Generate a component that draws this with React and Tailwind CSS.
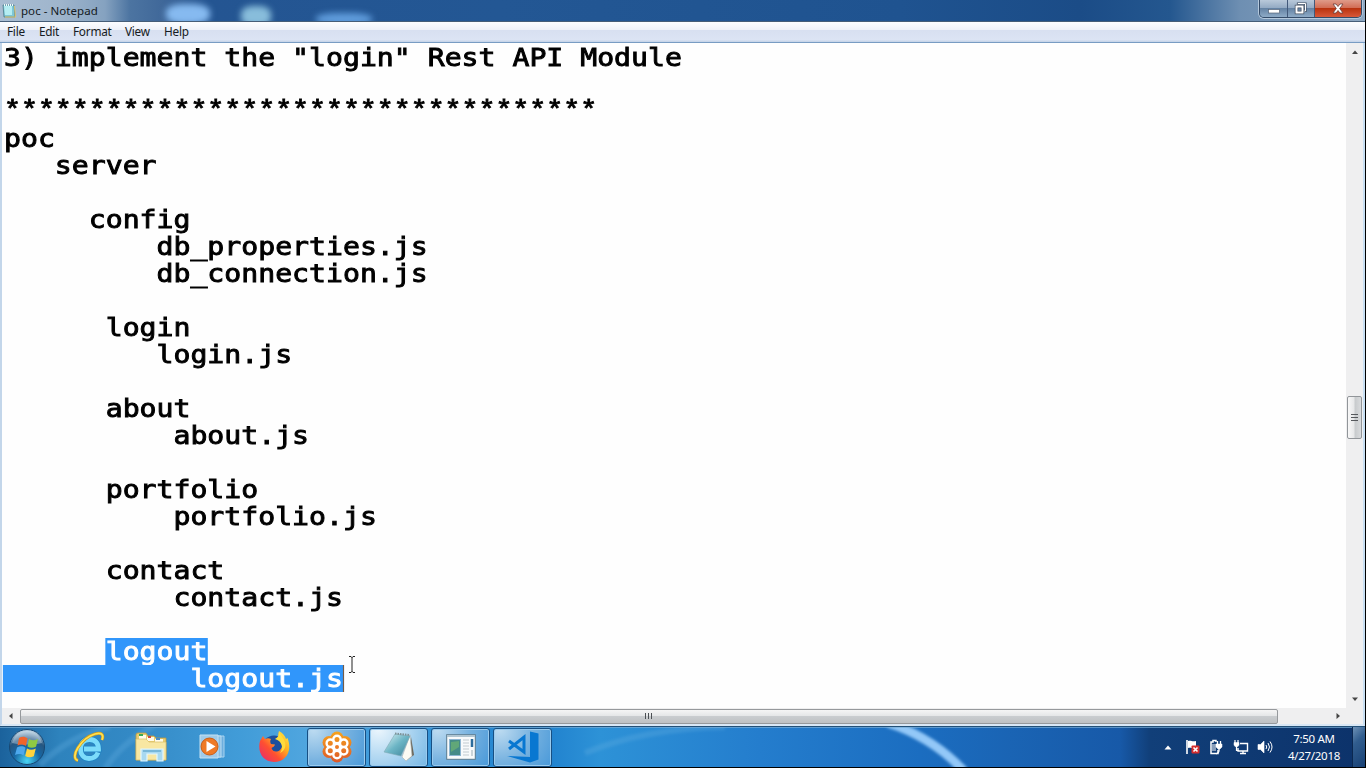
import React from "react";

const before = `3) implement the "login" Rest API Module

***********************************
poc
   server

     config
         db_properties.js
         db_connection.js

      login
         login.js

      about
          about.js

      portfolio
          portfolio.js

      contact
          contact.js
`.split("\n");

const menus = [
  ["File", "w-[32px]"],
  ["Edit", "w-[34px]"],
  ["Format", "w-[52px]"],
  ["View", "w-[39px]"],
  ["Help", "w-[39px]"],
];

function NotepadSmall() {
  return (
    <svg width="14" height="16" viewBox="0 0 14 16">
      <path d="M1 2h11l1 12H2z" fill="#7fc7d6" stroke="#43717f" strokeWidth=".7" />
      <path d="M2 3h8v9H3z" fill="#b5edf2" />
      <path d="M2 2h10" stroke="#eefafa" strokeWidth="2" strokeDasharray="1 1" />
      <path d="M12.500 3l1 11H3" stroke="#e0c66c" fill="none" />
    </svg>
  );
}

function TitleBar() {
  return (
    <div className="relative flex h-[21px] shrink-0 items-center overflow-hidden bg-[linear-gradient(90deg,#a9bdd2_0,#9fb5cc_60px,#85a2c0_105px,#4c74a1_130px,#41699a_160px,#245592_210px,#235794_500px,#1f5390_900px,#1b4c87_1080px,#24578f_1170px,#6e8fb2_1240px,#8ea8c2_1366px)] pl-[2px]">
      <div className="absolute left-[166px] top-[4px] h-[20px] w-[44px] rounded-[40%] bg-[#86baf0] blur-[3px]" />
      <div className="absolute left-[241px] top-[6px] h-[20px] w-[30px] rounded-[40%] bg-[#88bddb] blur-[3px]" />
      <div className="absolute left-[316px] top-[13px] h-[12px] w-[56px] rounded-[40%] bg-[#5f9cdc] blur-[3px]" />
      <NotepadSmall />
      <span className="relative ml-[5px] text-[11.5px] leading-[20px] tracking-[0.05px] text-[#141a22]">poc - Notepad</span>
      <div className="absolute left-[1259px] top-0 flex h-[18px] w-[103px] overflow-hidden rounded-b-[5px] border border-t-0 border-[#344c69] shadow-[0_0_0_1px_#b4c8dc]">
        <div className="flex w-[28px] items-center justify-center border-r border-[#42597a] bg-[linear-gradient(#b9c9da_0,#94abc4_45%,#6583a4_50%,#8eabc7_100%)]">
          <svg width="12" height="6" viewBox="0 0 12 6" className="mt-[4px]"><rect x=".5" y="1.500" width="11" height="3.500" fill="#fff" stroke="#56657a" strokeWidth=".7" /></svg>
        </div>
        <div className="flex w-[27px] items-center justify-center border-r border-[#42597a] bg-[linear-gradient(#b9c9da_0,#94abc4_45%,#6583a4_50%,#8eabc7_100%)] pr-[2px]">
          <svg width="13" height="13" viewBox="0 0 13 13" fill="none" className="mb-[1px]">
            <path d="M4 3V1.500h7.500V9H9.500" stroke="#3e4b5c" strokeWidth="2.200" />
            <path d="M4 2.500V1.500h7.500V9H9.500" stroke="#fff" strokeWidth="1" />
            <rect x="2.500" y="4.500" width="6" height="6" stroke="#3e4b5c" strokeWidth="3.400" />
            <rect x="2.500" y="4.500" width="6" height="6" stroke="#fff" strokeWidth="2" />
          </svg>
        </div>
        <div className="flex flex-1 items-center justify-center bg-[linear-gradient(#df9b89_0,#d26e56_45%,#b9330f_50%,#d8593a_100%)]">
          <svg width="12" height="11" viewBox="0 0 12 11" className="mb-[1px]">
            <path d="M1 1h3l2 2.500L8 1h3L7.700 5.500 11 10H8L6 7.500 4 10H1l3.300-4.500z" fill="#fff" stroke="#6a3d3a" strokeWidth=".8" />
          </svg>
        </div>
      </div>
    </div>
  );
}

function Arrow({ d }) {
  return (
    <svg width="8" height="8" viewBox="0 0 8 8"><path d={d} fill="#454545" /></svg>
  );
}

function IeIcon() {
  return (
    <svg width="32" height="32" viewBox="0 0 32 32" fill="none">
      <path d="M25 21.500C23.500 25.500 20 27.500 16 27.500 10.500 27.500 7.500 23.500 7.500 18S11 8.500 16.500 8.500 25.500 12 25.500 18H11" stroke="#2184c4" strokeWidth="6.400" />
      <path d="M25 21.500C23.500 25.500 20 27.500 16 27.500 10.500 27.500 7.500 23.500 7.500 18S11 8.500 16.500 8.500 25.500 12 25.500 18H11" stroke="#7cdcfb" strokeWidth="4.800" />
      <path d="M5 29.500C-4 27 8 7 22 3c7-2 9 1 7 6" stroke="#d79e16" strokeWidth="3" />
      <path d="M5 29.500C-4 27 8 7 22 3c7-2 9 1 7 6" stroke="#ffe052" strokeWidth="1.800" />
    </svg>
  );
}

function StartOrb() {
  return (
    <svg width="38" height="38" viewBox="0 0 38 38">
      <defs>
        <radialGradient id="orb" cx=".5" cy=".9" r=".85">
          <stop offset="0" stopColor="#49d6f5" /><stop offset=".45" stopColor="#1767a4" /><stop offset=".75" stopColor="#265680" /><stop offset="1" stopColor="#b3cbdc" />
        </radialGradient>
      </defs>
      <circle cx="19" cy="19" r="17.500" fill="url(#orb)" stroke="#174873" />
      <path d="M4 15C6 7 12 3 19 3s13 4 15 12c-9 2-20 2-30 0z" fill="#dcebf5" opacity=".38" />
      <path d="M11 10c3-2 6-1.500 8.500.300L18 18c-3-2-5.500-2-8.500-.500z" fill="#f0642b" />
      <path d="M21 11c3 1.800 5.500 1.500 9 0l-2 7.800c-3 1.500-6 1.300-8.500-.200z" fill="#8fca43" />
      <path d="M9 19.500c3-1.700 6-1.400 8.500.300l-2 7.700c-3-2-5.500-1.800-8.500-.500z" fill="#4da8ec" />
      <path d="M19 20.500c3 1.800 5.500 1.500 8.800 0l-2 7.800c-3 1.500-6 1.300-8.600-.300z" fill="#ffd33d" />
    </svg>
  );
}

function FolderIcon() {
  return (
    <svg width="34" height="32" viewBox="0 0 34 32">
      <path d="M2 4q0-2 2-2h8l2 3h6l2 2h10v22H2z" fill="#e9cd72" stroke="#b99a43" strokeWidth=".8" />
      <path d="M5 4h7v4H5zM13 6h7v4h-7zM21 8h8v4h-8z" fill="#fffbe8" />
      <path d="M5 3h4v2H5z" fill="#3caa50" /><path d="M14 5h3v2h-3z" fill="#d44939" /><path d="M22 7h4v2h-4z" fill="#4a8cc8" />
      <path d="M2 8h10l3 3h17v18H2z" fill="#f8e7a2" stroke="#d8bd67" strokeWidth=".7" />
      <path d="M7 30V18h22v12h-6v-7H13v7z" fill="#a9d9f0" stroke="#e2f7ff" strokeWidth="1.200" />
      <path d="M9 20h18" stroke="#6aadd2" strokeWidth="1.500" />
    </svg>
  );
}

function MediaIcon() {
  return (
    <svg width="26" height="26" viewBox="0 0 26 26">
      <path d="M5 2h20v21H5z" fill="#6daede" stroke="#a9d4f0" />
      <path d="M3 2h19v21H3z" fill="#87bee5" stroke="#b8dcf2" />
      <path d="M1 1h18v23H1z" fill="#9fcbe9" stroke="#c4e1f2" />
      <circle cx="10.500" cy="12.500" r="8.500" fill="#ee7a25" stroke="#c95d16" />
      <path d="M7.500 7l9 5.500-9 5.500z" fill="#fff" />
    </svg>
  );
}

function FirefoxIcon() {
  return (
    <svg width="32" height="32" viewBox="0 0 32 32">
      <defs>
        <linearGradient id="fox" x1="1" y1="0" x2="0" y2="1">
          <stop offset="0" stopColor="#fff34f" /><stop offset=".35" stopColor="#ffb021" /><stop offset=".62" stopColor="#ff4f31" /><stop offset="1" stopColor="#e22679" />
        </linearGradient>
      </defs>
      <circle cx="16" cy="16.500" r="12" fill="#1d4f9d" />
      <path d="M2 10l3-5 2 3c2-1 4-1 6 0-1 2-1 3 0 5l4 .5c-.5 2-2 2.500-3.500 3.500 1 4 5.500 4.500 8.500 2 4-4 2-8-1-11-1-3-1-5 0-8 4 2 6 5 7 8l1.500-1C35 21 27 31 16 31 5 31-1 21 2 10z" fill="url(#fox)" />
      <path d="M17 8c7 2 9 9 5 14 6-3 7-9 3-15l-4-6c0 4-1 5-4 7z" fill="#ffdb3c" />
    </svg>
  );
}

function FlowerIcon() {
  return (
    <svg width="32" height="32" viewBox="0 0 32 32">
      <defs><linearGradient id="petal" x1="0" y1="0" x2="0" y2="32" gradientUnits="userSpaceOnUse"><stop offset="0" stopColor="#f6a51d" /><stop offset="1" stopColor="#dd5629" /></linearGradient></defs>
      <g fill="url(#petal)">
        <circle cx="16" cy="7" r="6.500" /><circle cx="24" cy="11.500" r="6.500" /><circle cx="24" cy="20.500" r="6.500" />
        <circle cx="16" cy="25" r="6.500" /><circle cx="8" cy="20.500" r="6.500" /><circle cx="8" cy="11.500" r="6.500" />
      </g>
      <g fill="url(#petal)" stroke="#fff" strokeWidth="2.400">
        <circle cx="16" cy="8.500" r="3.700" /><circle cx="22.700" cy="12.200" r="3.700" /><circle cx="22.700" cy="19.800" r="3.700" />
        <circle cx="16" cy="23.500" r="3.700" /><circle cx="9.300" cy="19.800" r="3.700" /><circle cx="9.300" cy="12.200" r="3.700" />
      </g>
      <circle cx="16" cy="16" r="4.200" fill="#fff" /><circle cx="16" cy="16" r="2" fill="#ed7b25" />
    </svg>
  );
}

function NotepadBig() {
  return (
    <svg width="32" height="30" viewBox="0 0 32 30">
      <defs><linearGradient id="pad" x1="0" y1="0" x2="1" y2="1"><stop offset="0" stopColor="#dff4f5" /><stop offset=".5" stopColor="#6cb5c5" /><stop offset="1" stopColor="#3c8298" /></linearGradient></defs>
      <path d="M28 5l3 18-7 5z" fill="#6b6558" />
      <path d="M27 3l2 21-6 5-4-4z" fill="#fbfbf4" stroke="#a9b2b1" strokeWidth=".6" />
      <path d="M12 2l15 2-9 20L1 20z" fill="url(#pad)" stroke="#7faab5" strokeWidth=".6" />
      <path d="M12 1.500l15 1.500" stroke="#7d9297" strokeWidth="2" strokeDasharray="1.500 1" />
    </svg>
  );
}

function PanelIcon() {
  return (
    <svg width="30" height="26" viewBox="0 0 30 26">
      <rect x=".7" y=".7" width="28.600" height="24.600" fill="#f8fafb" stroke="#58798e" />
      <path d="M1 2h28" stroke="#b0c5d1" strokeWidth="2" />
      <rect x="3.500" y="5.500" width="11" height="16" fill="#458b88" stroke="#8db6d2" />
      <path d="M5 8l8-1v6l-8 5z" fill="#61a778" />
      <path d="M17 6h6M17 9h6M17 12h6M17 15h6M17 18h6M17 21h6" stroke="#c2cbd0" />
      <path d="M26 5v8" stroke="#2c6c9d" strokeWidth="2.500" /><path d="M26 16v6" stroke="#cbd4d9" strokeWidth="2" />
    </svg>
  );
}

function CodeIcon() {
  return (
    <svg width="33" height="32" viewBox="0 0 33 32">
      <path d="M24 .5l8.500 2v26l-8.500 3L1 25l23 1z" fill="#0877d1" />
      <path d="M3 10l15 11V6L3 18" fill="none" stroke="#0877d1" strokeWidth="3" />
    </svg>
  );
}

function TaskButton({ children, active }) {
  return (
    <div className={
      "flex h-[39px] w-[59px] items-center justify-center rounded-[3px] border border-[#174f83] shadow-[inset_0_0_0_1px_#9acbee] " +
      (active
        ? "bg-[radial-gradient(circle_at_15%_0%,#ecf6fd_0,#b4d9f2_45%,#76b7e5_100%)]"
        : "bg-[radial-gradient(circle_at_10%_0%,#bedcf1_0,#79b3e0_50%,#4999d9_100%)]")
    }>
      {children}
    </div>
  );
}

function Tray() {
  return (
    <div className="flex h-full items-center">
      <svg width="8" height="5" viewBox="0 0 8 5" className="mr-[13px]"><path d="M4 .5L7.500 4.500h-7z" fill="#fff" /></svg>
      <svg width="16" height="16" viewBox="0 0 16 16" className="mr-[7px]">
        <path d="M2 1v14" stroke="#fff" strokeWidth="1.600" /><path d="M3 2c3-1 4 1 8 0v7c-4 1-5-1-8 0z" fill="#fff" />
        <rect x="6.500" y="6.500" width="8" height="8" rx="1" fill="#d52d2d" /><path d="M8.500 8.500l4 4m0-4l-4 4" stroke="#fff" strokeWidth="1.600" />
      </svg>
      <svg width="16" height="16" viewBox="0 0 16 16" className="mr-[9px]" fill="none" stroke="#fff">
        <path d="M8 3V1.500H5V3H3v11.500h7V11" strokeWidth="1.500" /><path d="M5 5v7M7 5v7" strokeWidth="1" />
        <path d="M9.500 2v4M12.500 2v4M11 9v3c0 2-2 2-3 3" strokeWidth="1.300" /><path d="M8 5h6v3l-2 2h-2L8 8z" fill="#fff" strokeWidth=".5" />
      </svg>
      <svg width="16" height="16" viewBox="0 0 16 16" className="mr-[8px]" fill="none" stroke="#fff">
        <path d="M7 4.500h7.500v7.500H5V9" strokeWidth="1.400" /><path d="M10 12v2.500M7 14.500h6" strokeWidth="1.400" />
        <path d="M2 1v3m3-3v3M3.500 7v4.500h2" strokeWidth="1.200" /><path d="M1 3.500h5V6L5 7.500H2L1 6z" fill="#fff" strokeWidth=".5" />
      </svg>
      <svg width="16" height="16" viewBox="0 0 16 16" fill="none" stroke="#fff">
        <path d="M1 5.500h2.500L7 2v12l-3.500-3.500H1z" fill="#fff" strokeWidth=".6" />
        <path d="M9 6q1.500 2 0 4M11 4q3 4 0 8M13 2.500q4 5.500 0 11" strokeWidth="1" />
      </svg>
      <div className="ml-[7px] w-[68px] text-center text-[11.5px] leading-[17px] tracking-[-0.3px] text-white">
        <div>7:50 AM</div>
        <div>4/27/2018</div>
      </div>
      <div className="ml-[4px] h-[41px] w-[13px] border-l border-[#0b2850] bg-[linear-gradient(135deg,#6d91b6_0,#315d8e_35%,#173f73_100%)]" />
    </div>
  );
}

function Taskbar() {
  return (
    <div className="relative flex h-[41px] shrink-0 justify-between overflow-hidden border-t border-[#225078] bg-[linear-gradient(90deg,#1b629c_0,#2e83bd_60px,#3389c5_130px,#419cd8_240px,#50a6df_310px,#3293d7_430px,#1f80cd_540px,#2d92d7_600px,#247dcd_760px,#1b6dc0_920px,#1a64b4_1010px,#1759a8_1120px,#113f79_1150px,#0c326a_1366px)]">
      <svg width="1366" height="41" viewBox="0 0 1366 41" className="pointer-events-none absolute inset-0">
        <defs><filter id="soft" x="-20%" y="-20%" width="140%" height="140%"><feGaussianBlur stdDeviation="1.800" /></filter></defs>
        <path d="M888-4q44 14 76 48" stroke="#93c8f8" strokeWidth="9" fill="none" filter="url(#soft)" />
        <path d="M40 38Q70 8 110 0M105 42q15-25 50-44M585 26q60-25 140-26" stroke="#65afe1" strokeWidth="6" fill="none" opacity=".3" filter="url(#soft)" />
        <path d="M0 .5h1366" stroke="#78acd5" strokeWidth="1" opacity=".7" />
      </svg>
      <div className="relative flex items-center">
        <div className="ml-[8px] w-[38px]"><StartOrb /></div>
        <div className="ml-[27px] w-[32px]"><IeIcon /></div>
        <div className="ml-[29px] w-[34px]"><FolderIcon /></div>
        <div className="ml-[31px] w-[26px]"><MediaIcon /></div>
        <div className="ml-[33px] w-[32px]"><FirefoxIcon /></div>
        <div className="ml-[17px] flex gap-[3px]">
          <TaskButton><FlowerIcon /></TaskButton>
          <TaskButton active><NotepadBig /></TaskButton>
          <TaskButton><PanelIcon /></TaskButton>
          <TaskButton><CodeIcon /></TaskButton>
        </div>
      </div>
      <div className="relative"><Tray /></div>
    </div>
  );
}

export default function App() {
  return (
    <div className="flex h-[768px] w-[1366px] flex-col overflow-hidden border-b border-r border-black bg-white font-['Noto_Sans',sans-serif]">
      <TitleBar />
      <div className="flex h-[22px] shrink-0 items-center border-b border-t border-b-[#789cc3] border-t-[#465e78] bg-[linear-gradient(#fcfdff_0,#eff2f9_38%,#d8e0f1_42%,#dce4f4_88%,#c3d2e7_100%)] pb-[2px] pl-[7px] text-[11.8px] leading-[18px] tracking-[-0.25px] text-[#171b22]">
        {menus.map(([label, width]) => <div key={label} className={width}>{label}</div>)}
      </div>
      <div className="flex h-[665px] shrink-0 border-l-2 border-r-2 border-l-[#c3d6ea] border-r-[#c9e0f4]">
        <div className="relative min-w-0 flex-1 overflow-hidden bg-[#fefefe] pl-[2px] pt-px font-['DejaVu_Sans_Mono',monospace] text-[25px] font-normal leading-[27px] text-black [-webkit-text-stroke:0.9px_currentColor]">
          <div className="w-[1190px] origin-top-left scale-x-[1.126]">
            {before.map((line, i) => (
              <div key={i} className={"h-[27px] whitespace-pre " + (line.startsWith("***") ? "font-['Liberation_Mono',monospace] text-[25.08px]" : "")}>{line}</div>
            ))}
            <div className="flex h-[27px] whitespace-pre">
              <span>{"      "}</span>
              <span className="bg-[#3096fb] text-white">logout</span>
            </div>
            <div className="-ml-px flex h-[27px] whitespace-pre">
              <span className="border-r border-[#765b45] bg-[#3096fb] pl-px text-white">{"           logout.js"}</span>
            </div>
          </div>
          <svg width="8" height="17" viewBox="0 0 8 17" className="absolute left-[346px] top-[613px]" fill="none" stroke="#222">
            <path d="M1 .5h2l1 1 1-1h2M4 1v15M1 16.500h2l1-1 1 1h2" />
          </svg>
        </div>
        <div className="flex w-[17px] shrink-0 flex-col items-center bg-[#efeff0]">
          <div className="flex h-[18px] items-center"><Arrow d="M4 2.500L7 6H1z" /></div>
          <div className="mt-[335px] flex h-[43px] w-[15px] flex-col items-center justify-center gap-[2px] rounded-[2px] border border-[#919599] bg-[linear-gradient(90deg,#f8f8f8_0,#e7e8e9_45%,#c8cbcd_55%,#d9dbdd_100%)]">
            <i className="h-px w-[7px] bg-[#55585c]" /><i className="h-px w-[7px] bg-[#55585c]" /><i className="h-px w-[7px] bg-[#55585c]" />
          </div>
          <div className="mb-[5px] mt-auto flex"><Arrow d="M1 2.500h6L4 6z" /></div>
        </div>
      </div>
      <div className="flex h-[18px] shrink-0 items-center border-x-2 border-b-2 border-b-[#d9e7f5] border-l-[#c3d6ea] border-r-[#c9e0f4] bg-[#efeff0]">
        <div className="flex w-[18px] justify-center"><Arrow d="M2 4l3.500-3v6z" /></div>
        <div className="flex h-[15px] w-[1258px] items-center justify-center gap-[2px] rounded-[2px] border border-[#96999c] bg-[linear-gradient(#f5f5f5_0,#e5e6e7_45%,#c9cccf_50%,#bfc1c3_100%)] pr-[2px]">
          <i className="mb-px h-[6px] w-px bg-[#4b4f53]" /><i className="mb-px h-[6px] w-px bg-[#4b4f53]" /><i className="mb-px h-[6px] w-px bg-[#4b4f53]" />
        </div>
        <div className="ml-[56px]"><Arrow d="M6 4L2.500 1v6z" /></div>
      </div>
      <Taskbar />
    </div>
  );
}
